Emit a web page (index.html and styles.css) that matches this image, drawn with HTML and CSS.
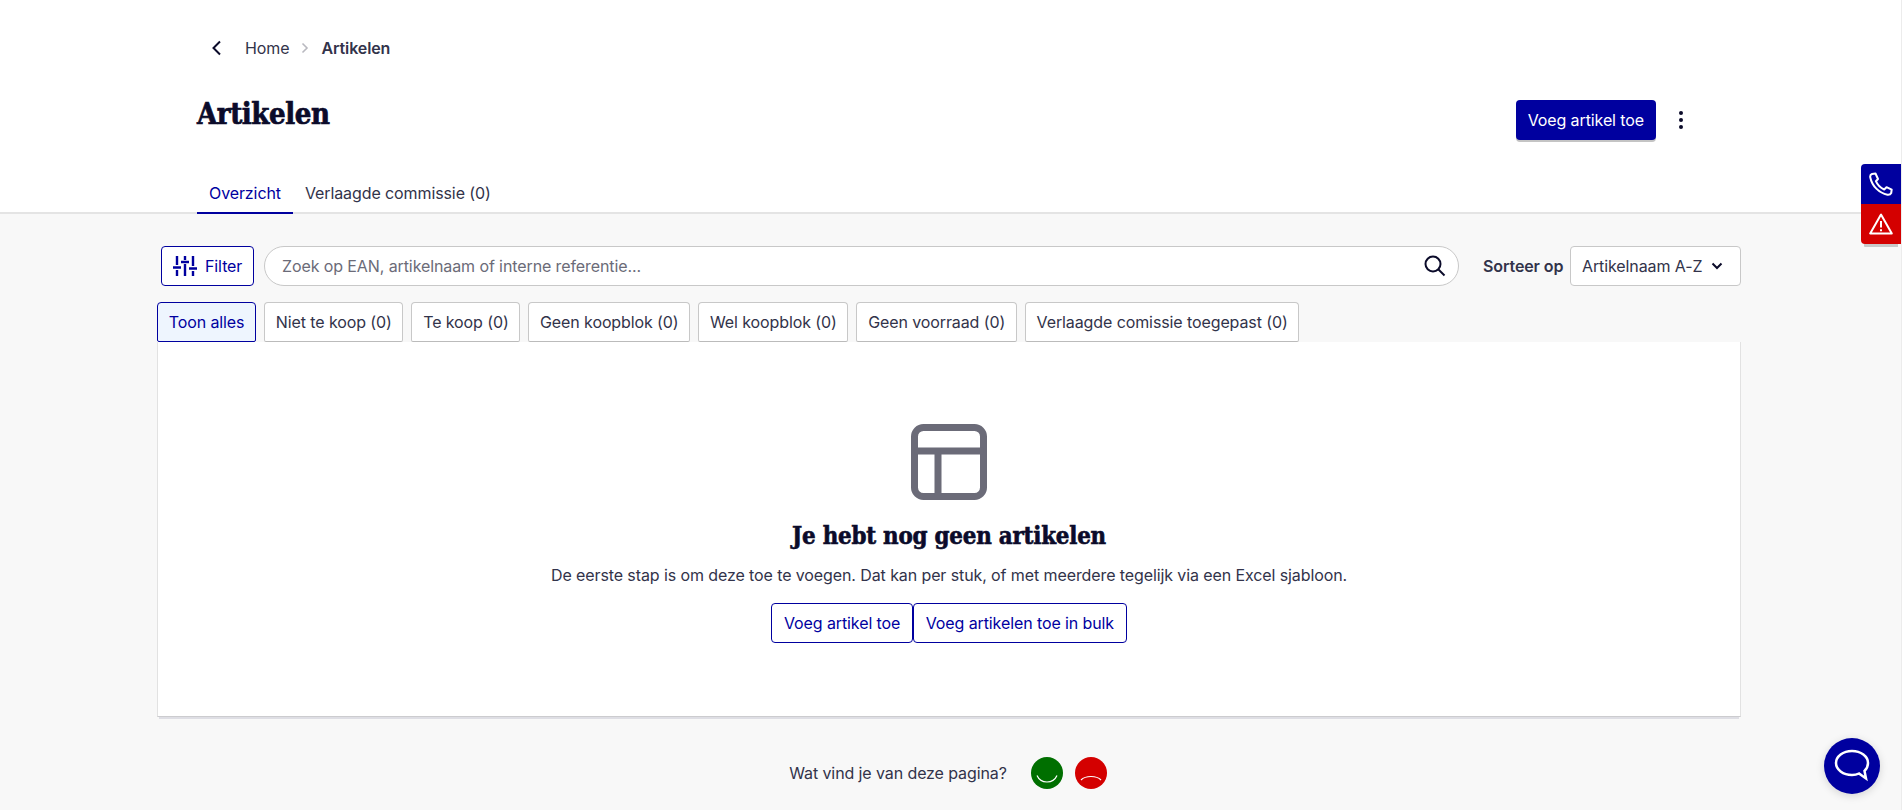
FILE: index.html
```html
<!DOCTYPE html>
<html lang="nl">
<head>
  <meta charset="UTF-8" />
  <title>Artikelen</title>
  <link rel="stylesheet" href="styles.css">
</head>
<body>

  <header class="top">
    <nav class="crumbs">
      <svg class="crumb-back" width="12" height="16" viewBox="0 0 12 16"><path d="M9 1.500 2.500 8 9 14.500" fill="none" stroke="#0b0b2a" stroke-width="2" /></svg>
      <a class="crumb">Home</a>
      <svg class="crumb-sep" width="8" height="12" viewBox="0 0 8 12"><path d="M1.500 1.500 6 6l-4.500 4.500" fill="none" stroke="#b9b9c0" stroke-width="1.600" /></svg>
      <strong class="crumb-now">Artikelen</strong>
    </nav>

    <div class="title-row">
      <h1>Artikelen</h1>
      <div class="title-actions">
        <button class="btn-primary">Voeg artikel toe</button>
        <button class="btn-more">
          <svg width="6" height="20" viewBox="0 0 6 20"><circle cx="3" cy="3" r="2" fill="#0b0b2a" /><circle cx="3" cy="10" r="2" fill="#0b0b2a" /><circle cx="3" cy="17" r="2" fill="#0b0b2a" /></svg>
        </button>
      </div>
    </div>

    <div class="tabs">
      <a class="tab active">Overzicht</a>
      <a class="tab">Verlaagde commissie (0)</a>
    </div>
  </header>

  <main class="content">
    <div class="toolbar">
      <button class="btn-filter">
        <svg width="24" height="20" viewBox="0 0 24 20" fill="none" stroke="#00009f" stroke-width="2.400">
          <path d="M4 0v9M4 14v6M12 0v4M12 8v12M20 0v10M20 15v5" />
          <path d="M0 11.500h8M8 6h8M16 12.500h8" />
        </svg>
        Filter
      </button>
      <div class="search">
        <span class="search-text">Zoek op EAN, artikelnaam of interne referentie...</span>
        <svg width="22" height="22" viewBox="0 0 22 22" fill="none" stroke="#0b0b2a" stroke-width="2"><circle cx="9" cy="9" r="7.500" /><path d="m14.500 14.500 6 6" /></svg>
      </div>
      <strong class="sort-label">Sorteer op</strong>
      <div class="sort-select">
        Artikelnaam A-Z
        <svg width="12" height="8" viewBox="0 0 12 8"><path d="m1.500 1.500 4.500 4.500 4.500-4.500" fill="none" stroke="#0b0b2a" stroke-width="2" /></svg>
      </div>
    </div>

    <div class="chips">
      <button class="chip active">Toon alles</button>
      <button class="chip">Niet te koop (0)</button>
      <button class="chip">Te koop (0)</button>
      <button class="chip">Geen koopblok (0)</button>
      <button class="chip">Wel koopblok (0)</button>
      <button class="chip">Geen voorraad (0)</button>
      <button class="chip">Verlaagde comissie toegepast (0)</button>
    </div>

    <section class="card">
      <svg class="empty-icon" width="76" height="76" viewBox="0 0 76 76" fill="none" stroke="#6b6b78" stroke-width="7">
        <rect x="3.500" y="3.500" width="69" height="69" rx="9" />
        <path d="M3.500 27h69M27 27v45" />
      </svg>
      <h2>Je hebt nog geen artikelen</h2>
      <p>De eerste stap is om deze toe te voegen. Dat kan per stuk, of met meerdere tegelijk via een Excel sjabloon.</p>
      <div class="card-actions">
        <button class="btn-outline">Voeg artikel toe</button>
        <button class="btn-outline">Voeg artikelen toe in bulk</button>
      </div>
    </section>

    <div class="rate">
      <span>Wat vind je van deze pagina?</span>
      <div class="rate-btn good">
        <svg width="32" height="32" viewBox="0 0 32 32"><path d="M6 18.500c2 4.500 5.500 6.500 10 6.500s8-2 10-6.500" fill="none" stroke="#fff" stroke-width="1.200" /></svg>
      </div>
      <div class="rate-btn bad">
        <svg width="32" height="32" viewBox="0 0 32 32"><path d="M6 23c2.500-2.500 5.500-3.500 10-3.500s7.500 1 10 3.500" fill="none" stroke="#fff" stroke-width="1.200" /></svg>
      </div>
    </div>
  </main>

  <aside class="side-tabs">
    <div class="side-tab phone">
      <svg width="24" height="24" viewBox="0 0 24 24" fill="none" stroke="#fff" stroke-width="2" stroke-linejoin="round"><path d="M6.500 1.500 3 2C1.500 2.500 1 4 1.300 5.500 3 14 10 21 18.500 22.800c1.500.2 3-.4 3.700-1.800l.5-3.300-5.200-2.500-2.300 2.300c-3.500-1.500-6.800-4.800-8.300-8.300L9 7z" /></svg>
    </div>
    <div class="side-tab alert">
      <svg width="24" height="22" viewBox="0 0 24 22" fill="none" stroke="#fff" stroke-width="2" stroke-linejoin="round"><path d="M12 1.500 1.200 20.500h21.600z" /><path d="M12 8v6.500M12 16.200v2" /></svg>
    </div>
  </aside>

  <button class="chat">
    <svg width="36" height="34" viewBox="0 0 36 34" fill="none" stroke="#fff" stroke-width="2.500"><path d="M18 2C9 2 2 7.500 2 14s7 12 16 12c3 0 5-.5 7-1.500l7 5-1.500-7.500c2.500-2.500 3.500-5 3.500-8C34 7.500 27 2 18 2z" /></svg>
  </button>

</body>
</html>
```

FILE: styles.css
```css
* {
  box-sizing: border-box;
}

html, body {
  height: 810px;
  overflow: hidden;
}

body {
  margin: 0;
  background: #f8f8f8;
  font-family: Inter, 'Noto Sans', sans-serif;
  font-size: 16px;
  letter-spacing: -0.1px;
  color: #32334a;
  border-right: 1px solid #ececec;
}

button {
  font: inherit;
  letter-spacing: inherit;
  cursor: pointer;
}

.top {
  height: 214px;
  background: #fff;
  border-bottom: 2px solid #e4e4e4;
  padding: 0 200px 0 197px;
}

.crumbs {
  display: flex;
  align-items: center;
  height: 96px;
  margin-bottom: -96px;
  padding-left: 14px;
}

.crumb-back {
  margin-right: 22px;
}

.crumb-sep {
  margin: 0 12px;
}

.crumb-now {
  font-weight: 600;
}

.title-row {
  display: flex;
  justify-content: space-between;
  height: 174px;
  padding-top: 97px;
}

h1 {
  margin: 0;
  font-family: 'DejaVu Serif Condensed', 'DejaVu Serif', serif;
  font-size: 29px;
  font-weight: 700;
  letter-spacing: -0.4px;
  line-height: 34px;
  color: #0b0b2a;
  -webkit-text-stroke: 0.7px #0b0b2a;
}

.title-actions {
  display: flex;
  align-items: flex-start;
  gap: 5px;
  padding-top: 3px;
}

.btn-primary {
  height: 40px;
  padding: 0 12px;
  background: #00009f;
  color: #fff;
  border: none;
  border-radius: 4px;
  box-shadow: 0 2px 0 #c4c4c4;
}

.btn-more {
  display: flex;
  align-items: center;
  justify-content: center;
  width: 40px;
  height: 40px;
  padding: 0;
  background: none;
  border: none;
}

.tabs {
  display: flex;
  height: 40px;
}

.tab {
  padding: 0 12px;
  line-height: 38px;
}

.tab.active {
  color: #00009f;
  border-bottom: 2px solid #00009f;
}

.content {
  width: 1584px;
  margin-left: 157px;
}

.toolbar {
  display: flex;
  align-items: center;
  height: 40px;
  margin-top: 32px;
  padding-left: 4px;
}

.btn-filter {
  display: flex;
  align-items: center;
  gap: 8px;
  width: 93px;
  height: 40px;
  padding: 0 0 0 11px;
  background: #fff;
  color: #00009f;
  border: 1px solid #00009f;
  border-radius: 4px;
}

.search {
  flex: 1;
  display: flex;
  align-items: center;
  justify-content: space-between;
  height: 40px;
  margin: 0 24px 0 10px;
  padding: 0 12px 0 17px;
  background: #fff;
  border: 1px solid #c8c8c8;
  border-radius: 20px;
  color: #6b6b78;
}

.sort-label {
  width: 87px;
  font-weight: 600;
}

.sort-select {
  display: flex;
  align-items: center;
  justify-content: space-between;
  width: 171px;
  height: 40px;
  padding: 0 17px 0 11px;
  background: #fff;
  border: 1px solid #c8c8c8;
  border-radius: 4px;
}

.chips {
  display: flex;
  gap: 8px;
  margin-top: 16px;
}

.chip {
  height: 40px;
  padding: 0 10.700px;
  background: #fff;
  color: #32334a;
  border: 1px solid #c8c8c8;
  border-bottom-color: #bbb;
  border-radius: 4px 4px 2px 2px;
}

.chip.active {
  background: #eef5fe;
  color: #00009f;
  border-color: #00009f;
}

.card {
  display: flex;
  flex-direction: column;
  align-items: center;
  height: 375px;
  padding-top: 82px;
  background: #fff;
  border: 1px solid #e2e2e2;
  border-top: none;
  border-bottom-color: #cccccf;
  box-shadow: 0 4px 0 -2px #dedee4;
}

.card h2 {
  margin: 21px 0 0;
  font-family: 'DejaVu Serif Condensed', 'DejaVu Serif', serif;
  font-size: 23.800px;
  font-weight: 700;
  letter-spacing: -0.2px;
  line-height: 30px;
  color: #0b0b2a;
  -webkit-text-stroke: 0.6px #0b0b2a;
}

.card p {
  margin: 9px 0 0;
  line-height: 30px;
}

.card-actions {
  display: flex;
  margin-top: 13px;
}

.btn-outline {
  height: 40px;
  padding: 0 11.700px;
  background: #fff;
  color: #00009f;
  border: 1px solid #00009f;
  border-radius: 4px;
}

.rate {
  display: flex;
  align-items: center;
  justify-content: center;
  gap: 12px;
  margin-top: 40px;
  padding-right: 2px;
}

.rate span {
  margin-right: 12px;
}

.rate-btn {
  width: 32px;
  height: 32px;
  border-radius: 50%;
}

.rate-btn.good {
  background: #006f00;
}

.rate-btn.bad {
  background: #d40000;
}

.side-tabs {
  position: fixed;
  top: 164px;
  right: 1px;
  width: 40px;
  border-radius: 4px 0 0 4px;
  box-shadow: 0 6px 0 -3px #c8c8c8;
}

.side-tab {
  display: flex;
  align-items: center;
  justify-content: center;
  height: 40px;
}

.side-tab.phone {
  background: #00009f;
  border-radius: 4px 0 0 0;
}

.side-tab.alert {
  background: #d40000;
  border-radius: 0 0 0 4px;
}

.chat {
  position: fixed;
  left: 1824px;
  top: 738px;
  display: flex;
  align-items: center;
  justify-content: center;
  width: 56px;
  height: 56px;
  padding: 0;
  background: #00009f;
  border: none;
  border-radius: 50%;
  box-shadow: 0 2px 8px rgba(0, 0, 0, 0.15);
}
```
